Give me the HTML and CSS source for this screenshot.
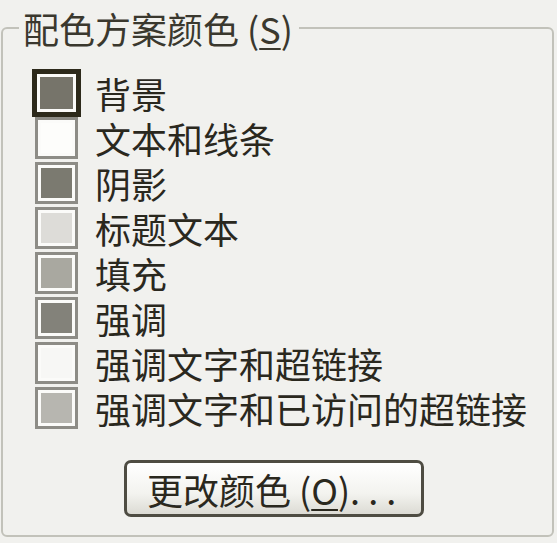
FILE: index.html
```html
<!DOCTYPE html>
<html lang="zh-CN">
<head>
    <meta charset="UTF-8">
    <title>配色方案颜色</title>
    <link rel="stylesheet" href="styles.css">
</head>
<body>
    <fieldset class="group">
        <legend class="group-title">配色方案颜色 (<u>S</u>)</legend>

        <!-- 颜色列表 -->
        <ul class="colors">
            <li class="color-row selected">
                <span class="swatch"><span class="fill c-back"></span></span>
                <span class="label">背景</span>
            </li>
            <li class="color-row">
                <span class="swatch"><span class="fill c-text"></span></span>
                <span class="label">文本和线条</span>
            </li>
            <li class="color-row">
                <span class="swatch"><span class="fill c-shadow"></span></span>
                <span class="label">阴影</span>
            </li>
            <li class="color-row">
                <span class="swatch"><span class="fill c-title"></span></span>
                <span class="label">标题文本</span>
            </li>
            <li class="color-row">
                <span class="swatch"><span class="fill c-fill"></span></span>
                <span class="label">填充</span>
            </li>
            <li class="color-row">
                <span class="swatch"><span class="fill c-accent"></span></span>
                <span class="label">强调</span>
            </li>
            <li class="color-row">
                <span class="swatch"><span class="fill c-link"></span></span>
                <span class="label">强调文字和超链接</span>
            </li>
            <li class="color-row">
                <span class="swatch"><span class="fill c-visited"></span></span>
                <span class="label">强调文字和已访问的超链接</span>
            </li>
        </ul>

        <div class="actions">
            <button class="btn">更改颜色 (<u>O</u>). . .</button>
        </div>
    </fieldset>
</body>
</html>
```

FILE: styles.css
```css
body {
    margin: 0;
    padding: 0;
    background-color: #f1f1ee;
    font-family: "Noto Sans CJK SC", "Liberation Sans", sans-serif;
    color: #2a281e;
    width: 557px;
    height: 543px;
    overflow: hidden;
}
.group {
    margin: 8px 3px 0 1px;
    height: 529px;
    box-sizing: border-box;
    padding: 0;
    border: 2px solid #c2c2ba;
    border-radius: 6px;
}
.group-title {
    margin-left: 16px;
    padding: 0 6px 0 4px;
    font-size: 36px;
    line-height: 40px;
    color: #3a382e;
}
.group-title u,
.btn u {
    text-decoration-thickness: 2px;
    text-underline-offset: 4px;
}
.colors {
    list-style: none;
    margin: 22px 0 0 0;
    padding: 0 0 0 30px;
}
.color-row {
    display: flex;
    align-items: center;
    height: 45px;
}
.swatch {
    box-sizing: border-box;
    width: 43px;
    height: 42px;
    margin: 0 17px 0 2px;
    border: 3px solid #8d8c86;
    padding: 3px;
    background-color: #fbfbf9;
}
.selected .swatch {
    width: 49px;
    height: 48px;
    margin: 0 14px 0 -1px;
    border: 5px solid #2d2a1b;
    padding: 3px;
}
.fill {
    display: block;
    width: 100%;
    height: 100%;
}
.label {
    font-size: 36px;
    line-height: 36px;
}
.c-back { background-color: #76746a; }
.c-text { background-color: #fdfdfb; }
.c-shadow { background-color: #7b7a70; }
.c-title { background-color: #dddcd8; }
.c-fill { background-color: #a9a8a0; }
.c-accent { background-color: #83827a; }
.c-link { background-color: #f7f7f5; }
.c-visited { background-color: #b7b6b0; }

.actions {
    padding: 30px 0 0 121px;
}
.btn {
    width: 300px;
    height: 57px;
    border: 3px solid #4e4c42;
    border-radius: 7px;
    background: linear-gradient(#ffffff, #f3f3ef 60%, #dcdbd4);
    font-family: "Noto Sans CJK SC", "Liberation Sans", sans-serif;
    font-size: 36px;
    line-height: 40px;
    color: #2a281e;
    padding: 0 0 0 20px;
    text-align: left;
    cursor: pointer;
}
```
